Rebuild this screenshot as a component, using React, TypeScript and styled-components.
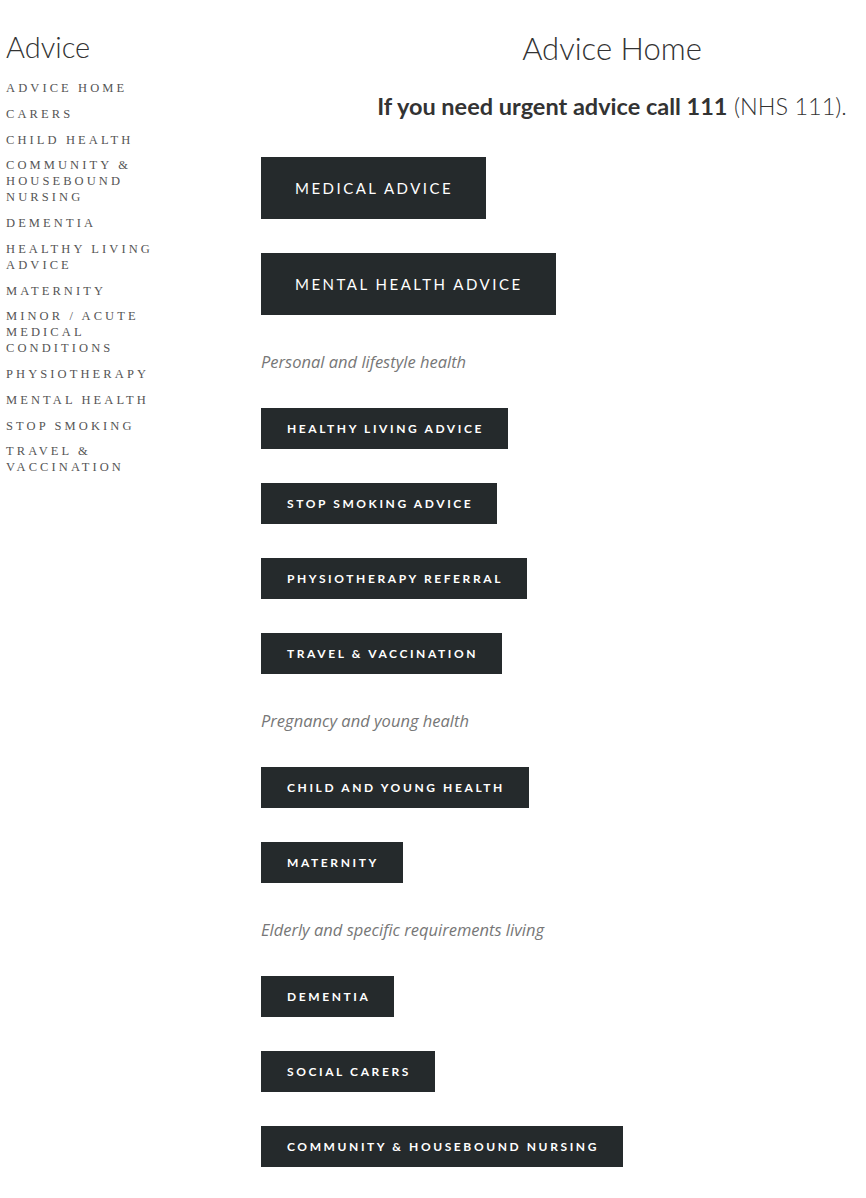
import React from "react";
import styled, { createGlobalStyle } from "styled-components";

const GlobalStyle = createGlobalStyle`
  html, body {
    margin: 0;
    padding: 0;
    background: #ffffff;
    overflow-x: hidden;
  }
  #root {
    overflow: hidden;
  }
`;

const navItems = [
  "Advice Home",
  "Carers",
  "Child Health",
  "Community & Housebound Nursing",
  "Dementia",
  "Healthy Living Advice",
  "Maternity",
  "Minor / Acute Medical Conditions",
  "Physiotherapy",
  "Mental Health",
  "Stop Smoking",
  "Travel & Vaccination",
];

type Block =
  | { kind: "big"; label: string }
  | { kind: "small"; label: string }
  | { kind: "note"; label: string };

const blocks: Block[] = [
  { kind: "big", label: "Medical Advice" },
  { kind: "big", label: "Mental Health Advice" },
  { kind: "note", label: "Personal and lifestyle health" },
  { kind: "small", label: "Healthy Living Advice" },
  { kind: "small", label: "Stop Smoking Advice" },
  { kind: "small", label: "Physiotherapy Referral" },
  { kind: "small", label: "Travel & Vaccination" },
  { kind: "note", label: "Pregnancy and young health" },
  { kind: "small", label: "Child and Young Health" },
  { kind: "small", label: "Maternity" },
  { kind: "note", label: "Elderly and specific requirements living" },
  { kind: "small", label: "Dementia" },
  { kind: "small", label: "Social Carers" },
  { kind: "small", label: "Community & Housebound Nursing" },
];

export default function App() {
  return (
    <>
      <GlobalStyle />
      <Page>
        <Sidebar>
          <SideTitle>Advice</SideTitle>
          <NavList>
            {navItems.map((item) => (
              <NavItem key={item}>{item}</NavItem>
            ))}
          </NavList>
        </Sidebar>
        <Main>
          <PageTitle>Advice Home</PageTitle>
          <Urgent>
            <strong>If you need urgent advice call 111</strong> (NHS 111).
          </Urgent>
          <Stack>
            {blocks.map((b) =>
              b.kind === "note" ? (
                <Note key={b.label}>{b.label}</Note>
              ) : (
                <AdviceButton key={b.label} $big={b.kind === "big"}>
                  {b.label}
                </AdviceButton>
              )
            )}
          </Stack>
        </Main>
      </Page>
    </>
  );
}

const Page = styled.div`
  display: flex;
  align-items: flex-start;
  width: 980px;
  padding: 0 0 30px 6px;
  box-sizing: border-box;
`;

const Sidebar = styled.aside`
  width: 152px;
  flex-shrink: 0;
  padding-top: 30px;
`;

const SideTitle = styled.h2`
  margin: 0 0 16px;
  font-family: Lato, "Open Sans", sans-serif;
  font-weight: 300;
  font-size: 29px;
  line-height: 34px;
  color: #333;
`;

const NavList = styled.ul`
  list-style: none;
  margin: 0;
  padding: 0;
  display: flex;
  flex-direction: column;
  gap: 9.75px;
`;

const NavItem = styled.li`
  font-family: "Liberation Serif", "DejaVu Serif", serif;
  font-size: 12.5px;
  line-height: 16px;
  letter-spacing: 3.1px;
  text-transform: uppercase;
  color: #555;
`;

const Main = styled.main`
  margin-left: 103px;
  width: 702px;
  padding-top: 30px;
`;

const PageTitle = styled.h1`
  margin: 0;
  text-align: center;
  font-family: Lato, "Open Sans", sans-serif;
  font-weight: 300;
  font-size: 31px;
  line-height: 36px;
  color: #333;
`;

const Urgent = styled.p`
  margin: 25px 0 0;
  text-align: center;
  font-family: Lato, "Open Sans", sans-serif;
  font-weight: 300;
  font-size: 23.5px;
  line-height: 30px;
  color: #333;

  & strong {
    font-weight: 700;
  }
`;

const Stack = styled.div`
  margin-top: 36px;
  display: flex;
  flex-direction: column;
  align-items: flex-start;
  gap: 34px;
`;

const AdviceButton = styled.a<{ $big?: boolean }>`
  display: inline-flex;
  align-items: center;
  box-sizing: border-box;
  background: #252a2c;
  color: #fff;
  text-transform: uppercase;
  font-family: Lato, "Open Sans", sans-serif;
  cursor: pointer;
  white-space: nowrap;
  height: ${(p) => (p.$big ? "62px" : "41px")};
  padding: ${(p) => (p.$big ? "0 33px 0 34px" : "0 24px 0 26px")};
  font-size: ${(p) => (p.$big ? "15px" : "12px")};
  font-weight: ${(p) => (p.$big ? 400 : 700)};
  letter-spacing: ${(p) => (p.$big ? "2.5px" : "2.6px")};
`;

const Note = styled.p`
  margin: 2px 0;
  font-family: "Open Sans", sans-serif;
  font-style: italic;
  font-weight: 400;
  font-size: 16.5px;
  line-height: 21px;
  color: #777;
`;
